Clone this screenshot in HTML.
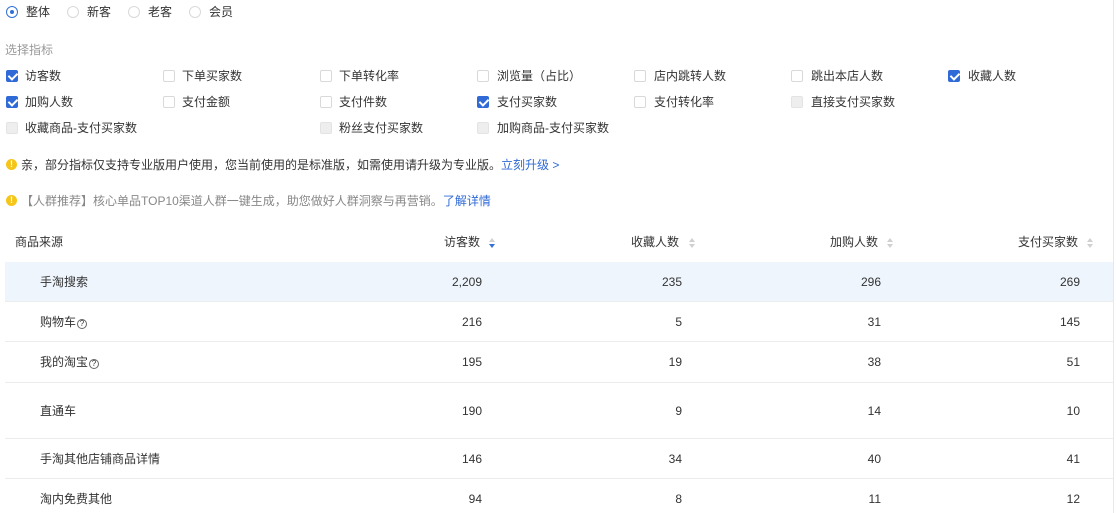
<!DOCTYPE html>
<html><head><meta charset="utf-8"><style>
*{margin:0;padding:0;box-sizing:border-box}
body{width:1116px;height:513px;overflow:hidden;background:#fff;font-family:"Liberation Sans","Noto Sans CJK SC",sans-serif;font-size:12px;color:#333;position:relative}
.a{position:absolute;white-space:nowrap;line-height:14px}
.r{position:absolute;width:12px;height:12px;border:1px solid #d9d9d9;border-radius:50%}
.r.on{border-color:#3370d8}
.r.on:after{content:"";position:absolute;left:3px;top:3px;width:4px;height:4px;border-radius:50%;background:#3370d8}
.c{position:absolute;width:12px;height:12px;border:1px solid #d9d9d9;border-radius:2px;background:#fff}
.c.dis{background:#eee;border-color:#e3e3e3}
.c.on{background:#2f6ad6;border-color:#2f6ad6}
.c.on:after{content:"";position:absolute;left:3px;top:0px;width:4px;height:7px;border:solid #fff;border-width:0 2px 2px 0;transform:rotate(45deg)}
.warn{position:absolute;width:11px;height:11px;border-radius:50%;background:#f5c518;color:#fff;font-size:9px;line-height:11px;text-align:center;font-weight:bold}
.line{position:absolute;left:5px;width:1108px;height:1px;background:#ececec}
.num{position:absolute;text-align:right;width:100px;line-height:14px}
.sort{position:absolute;width:6px;height:10px}
.sort:before,.sort:after{content:"";position:absolute;left:0;border-left:3px solid transparent;border-right:3px solid transparent}
.sort:before{top:0;border-bottom:4px solid #d0d0d0}
.sort:after{bottom:0;border-top:4px solid #d0d0d0}
.sort.act:after{border-top-color:#3370d8}
.q{display:inline-block;width:10px;height:10px;border:1px solid #666;border-radius:50%;font-size:8px;line-height:8px;text-align:center;vertical-align:0px;margin-left:1px}
</style></head><body>
<div class="r on" style="left:6px;top:6px"></div><div class="a" style="left:26px;top:5px">整体</div>
<div class="r" style="left:67px;top:6px"></div><div class="a" style="left:87px;top:5px">新客</div>
<div class="r" style="left:128px;top:6px"></div><div class="a" style="left:148px;top:5px">老客</div>
<div class="r" style="left:189px;top:6px"></div><div class="a" style="left:209px;top:5px">会员</div>
<div class="a" style="left:5px;top:43px;color:#999">选择指标</div>

<div class="c on" style="left:6px;top:70px"></div><div class="a" style="left:25px;top:69px">访客数</div>
<div class="c" style="left:163px;top:70px"></div><div class="a" style="left:182px;top:69px">下单买家数</div>
<div class="c" style="left:320px;top:70px"></div><div class="a" style="left:339px;top:69px">下单转化率</div>
<div class="c" style="left:477px;top:70px"></div><div class="a" style="left:497px;top:69px">浏览量（占比）</div>
<div class="c" style="left:634px;top:70px"></div><div class="a" style="left:654px;top:69px">店内跳转人数</div>
<div class="c" style="left:791px;top:70px"></div><div class="a" style="left:811px;top:69px">跳出本店人数</div>
<div class="c on" style="left:948px;top:70px"></div><div class="a" style="left:968px;top:69px">收藏人数</div>

<div class="c on" style="left:6px;top:96px"></div><div class="a" style="left:25px;top:95px">加购人数</div>
<div class="c" style="left:163px;top:96px"></div><div class="a" style="left:182px;top:95px">支付金额</div>
<div class="c" style="left:320px;top:96px"></div><div class="a" style="left:339px;top:95px">支付件数</div>
<div class="c on" style="left:477px;top:96px"></div><div class="a" style="left:497px;top:95px">支付买家数</div>
<div class="c" style="left:634px;top:96px"></div><div class="a" style="left:654px;top:95px">支付转化率</div>
<div class="c dis" style="left:791px;top:96px"></div><div class="a" style="left:811px;top:95px">直接支付买家数</div>

<div class="c dis" style="left:6px;top:122px"></div><div class="a" style="left:25px;top:121px">收藏商品-支付买家数</div>
<div class="c dis" style="left:320px;top:122px"></div><div class="a" style="left:339px;top:121px">粉丝支付买家数</div>
<div class="c dis" style="left:477px;top:122px"></div><div class="a" style="left:497px;top:121px">加购商品-支付买家数</div>

<div class="warn" style="left:6px;top:159px">!</div>
<div class="a" style="left:21px;top:158px">亲，部分指标仅支持专业版用户使用，您当前使用的是标准版，如需使用请升级为专业版。<span style="color:#2f6ad6">立刻升级 &gt;</span></div>
<div class="warn" style="left:6px;top:195px">!</div>
<div class="a" style="left:21px;top:194px;color:#888">【人群推荐】核心单品TOP10渠道人群一键生成，助您做好人群洞察与再营销。<span style="color:#2f6ad6">了解详情</span></div>

<div class="a" style="left:15px;top:235px">商品来源</div>
<div class="a" style="left:444px;top:235px">访客数</div><div class="sort act" style="left:489px;top:238px"></div>
<div class="a" style="left:631px;top:235px">收藏人数</div><div class="sort" style="left:689px;top:238px"></div>
<div class="a" style="left:830px;top:235px">加购人数</div><div class="sort" style="left:887px;top:238px"></div>
<div class="a" style="left:1018px;top:235px">支付买家数</div><div class="sort" style="left:1087px;top:238px"></div>

<div style="position:absolute;left:5px;top:262px;width:1108px;height:39px;background:#eef5fd"></div>
<div class="line" style="top:301px"></div>
<div class="line" style="top:341px"></div>
<div class="line" style="top:382px"></div>
<div class="line" style="top:438px"></div>
<div class="line" style="top:478px"></div>
<div style="position:absolute;left:1113px;top:0;width:1px;height:513px;background:#e8e8e8"></div>

<div class="a" style="left:40px;top:275px">手淘搜索</div>
<div class="a" style="left:40px;top:315px">购物车<span class="q">?</span></div>
<div class="a" style="left:40px;top:355px">我的淘宝<span class="q">?</span></div>
<div class="a" style="left:40px;top:404px">直通车</div>
<div class="a" style="left:40px;top:452px">手淘其他店铺商品详情</div>
<div class="a" style="left:40px;top:492px">淘内免费其他</div>

<div class="num" style="left:382px;top:275px">2,209</div><div class="num" style="left:582px;top:275px">235</div><div class="num" style="left:781px;top:275px">296</div><div class="num" style="left:980px;top:275px">269</div>
<div class="num" style="left:382px;top:315px">216</div><div class="num" style="left:582px;top:315px">5</div><div class="num" style="left:781px;top:315px">31</div><div class="num" style="left:980px;top:315px">145</div>
<div class="num" style="left:382px;top:355px">195</div><div class="num" style="left:582px;top:355px">19</div><div class="num" style="left:781px;top:355px">38</div><div class="num" style="left:980px;top:355px">51</div>
<div class="num" style="left:382px;top:404px">190</div><div class="num" style="left:582px;top:404px">9</div><div class="num" style="left:781px;top:404px">14</div><div class="num" style="left:980px;top:404px">10</div>
<div class="num" style="left:382px;top:452px">146</div><div class="num" style="left:582px;top:452px">34</div><div class="num" style="left:781px;top:452px">40</div><div class="num" style="left:980px;top:452px">41</div>
<div class="num" style="left:382px;top:492px">94</div><div class="num" style="left:582px;top:492px">8</div><div class="num" style="left:781px;top:492px">11</div><div class="num" style="left:980px;top:492px">12</div>
</body></html>
